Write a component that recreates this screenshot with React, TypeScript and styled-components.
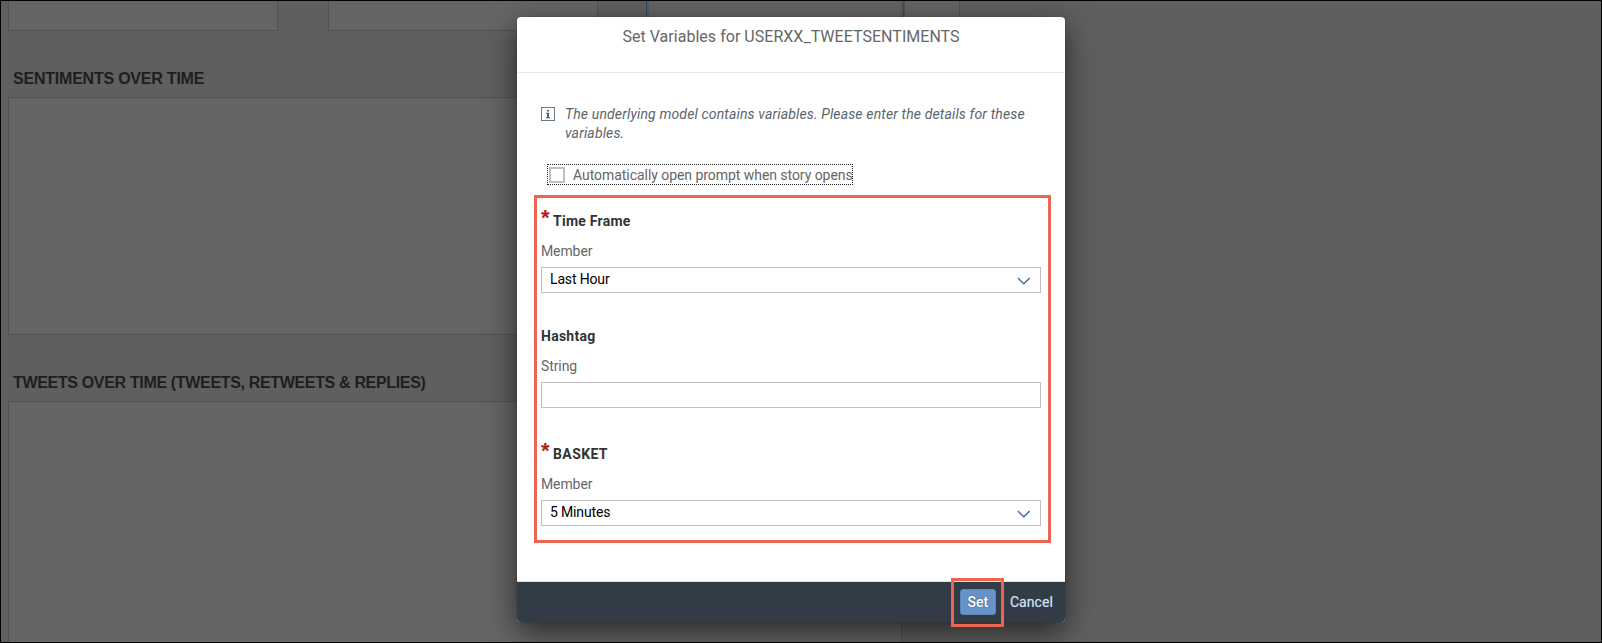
import React from 'react';
import styled, { createGlobalStyle } from 'styled-components';

const GlobalStyle = createGlobalStyle`
  *, *::before, *::after { box-sizing: border-box; }
  body { margin: 0; background: #5f5f5f; font-family: Roboto, "Liberation Sans", sans-serif; }
  button, input { font: inherit; }
`;

const Screen = styled.div`
  position: relative;
  width: 1602px;
  height: 643px;
  overflow: hidden;
  border: 1px solid #000;
  background: #5f5f5f;
`;

const Story = styled.main`
  display: flex;
  flex-direction: column;
  padding-left: 7px;
`;

const TileRow = styled.div`
  display: flex;
  align-items: flex-start;
  height: 30px;
`;

const Tile = styled.div<{ $width: number; $gap?: number }>`
  width: ${(p) => p.$width}px;
  height: 30px;
  margin-right: ${(p) => p.$gap ?? 0}px;
  background: #656565;
  border: 1px solid #515151;
  border-top: 0;
`;

const SelectedTile = styled(Tile)`
  background: #636363;
  border-color: #2d4a6d;
  box-shadow: inset 2px 0 #5b5b5b, inset -2px 0 #5b5b5b;
`;

const SectionTitle = styled.h2<{ $tracking: number }>`
  margin: 38px 0 8px 5px;
  font: 700 16px/20px "Liberation Sans", Arial, sans-serif;
  letter-spacing: ${(p) => p.$tracking}px;
  color: #1d1e1f;
`;

const ChartPanel = styled.div<{ $height: number }>`
  width: 894px;
  height: ${(p) => p.$height}px;
  flex: none;
  background: #656565;
  border: 1px solid #515151;
`;

const Dialog = styled.section`
  position: absolute;
  left: 516px;
  top: 16px;
  width: 548px;
  height: 605px;
  display: flex;
  flex-direction: column;
  border-radius: 4px;
  background: #fff;
  box-shadow: 0 10px 30px rgba(0, 0, 0, 0.6), 0 0 2px rgba(0, 0, 0, 0.2);
`;

const DialogHeader = styled.header`
  height: 56px;
  padding-top: 10px;
  border-bottom: 1px solid #e8e8e8;
  text-align: center;
  font-size: 16px;
  line-height: 20px;
  letter-spacing: 0.03px;
  color: #666;
`;

const DialogBody = styled.div`
  flex: 1;
  padding: 32px 14px 0 17px;
`;

const Info = styled.div`
  display: flex;
  gap: 10px;
  padding-left: 7px;
`;

const InfoIcon = styled.svg`
  flex: none;
  width: 14px;
  height: 14px;
  margin-top: 2px;
`;

const InfoText = styled.p`
  margin: 0;
  width: 475px;
  font-size: 14px;
  font-style: italic;
  line-height: 19px;
  letter-spacing: 0.145px;
  color: #5a656d;
`;

const CheckRow = styled.label`
  display: flex;
  align-items: center;
  width: 306px;
  height: 21px;
  margin: 21px 0 10px 13px;
  padding: 1px 0 0 1px;
  border: 1px dotted #222;
  font-size: 14px;
  line-height: 20px;
  letter-spacing: -0.05px;
  white-space: nowrap;
  color: #666;
`;

const CheckBox = styled.span`
  flex: none;
  width: 16px;
  height: 16px;
  margin-right: 8px;
  border: 2px solid #bfbfbf;
  background: #fff;
`;

const VariableForm = styled.div`
  width: 517px;
  height: 348px;
  padding: 13px 7px 13px 4px;
  border: 3px solid #ec6553;
`;

const Field = styled.div<{ $after?: number }>`
  display: flex;
  flex-direction: column;
  width: 500px;
  margin-bottom: ${(p) => p.$after ?? 0}px;
`;

const FieldName = styled.div<{ $tracking: number }>`
  display: flex;
  height: 20px;
  margin-bottom: 10px;
  font-size: 14px;
  font-weight: 700;
  line-height: 20px;
  letter-spacing: ${(p) => p.$tracking}px;
  color: #333;
`;

const Required = styled.span`
  width: 12px;
  margin-top: -4px;
  font-family: "Liberation Sans", Arial, sans-serif;
  font-size: 22px;
  line-height: 22px;
  letter-spacing: 0;
  color: #ae1f14;
`;

const FieldKind = styled.div`
  height: 20px;
  margin-bottom: 6px;
  font-size: 14px;
  line-height: 20px;
  letter-spacing: -0.1px;
  color: #666;
`;

const Select = styled.button`
  display: flex;
  justify-content: space-between;
  height: 26px;
  padding: 1px 10px 0 8px;
  border: 1px solid #bfbfbf;
  background: #fff;
  font-size: 14px;
  line-height: 20px;
  letter-spacing: -0.15px;
  color: #000;
`;

const Chevron = styled.svg`
  width: 13px;
  height: 8px;
  margin-top: 8px;
`;

const TextInput = styled.input`
  height: 26px;
  padding: 0 8px;
  border: 1px solid #bfbfbf;
  border-radius: 0;
  outline: 0;
  background: #fff;
  font-size: 14px;
`;

const DialogFooter = styled.footer`
  position: relative;
  display: flex;
  justify-content: flex-end;
  align-items: flex-start;
  gap: 14px;
  height: 41px;
  padding: 7px 12px 0 0;
  border-top: 1px solid #dfe1e3;
  border-radius: 0 0 4px 4px;
  background: #323c46;
  background-clip: padding-box;
`;

const SetButton = styled.button`
  width: 36px;
  height: 26px;
  padding: 0;
  border: 1px solid #5a87b9;
  border-radius: 3px;
  background: #6694c9;
  font-size: 14px;
  font-weight: 500;
  color: #fff;
  text-shadow: 0 0 2px rgba(0, 0, 0, 0.4);
`;

const CancelButton = styled.button`
  height: 26px;
  padding: 0;
  border: 0;
  background: none;
  font-size: 14px;
  letter-spacing: 0.08px;
  color: #d1e0f4;
  text-shadow: 0 0 1px rgba(209, 224, 244, 0.5);
`;

const SetHighlight = styled.div`
  position: absolute;
  right: 61px;
  top: -4px;
  width: 53px;
  height: 49px;
  border: 3px solid #ec6553;
  pointer-events: none;
`;

function Dropdown({ value }: { value: string }) {
  return (
    <Select>
      {value}
      <Chevron viewBox="0 0 13 8" fill="none" stroke="#456b9a" strokeWidth="1.4">
        <path d="M.9 1 6.8 6.7 12.7 1" />
      </Chevron>
    </Select>
  );
}

export default function App() {
  return (
    <>
      <GlobalStyle />
      <Screen>
        <Story>
          <TileRow>
            <Tile $width={270} $gap={50} />
            <Tile $width={270} $gap={48} />
            <SelectedTile $width={258} />
            <Tile $width={56} />
          </TileRow>
          <SectionTitle $tracking={-0.22}>SENTIMENTS OVER TIME</SectionTitle>
          <ChartPanel $height={238} />
          <SectionTitle $tracking={-0.335}>TWEETS OVER TIME (TWEETS, RETWEETS &amp; REPLIES)</SectionTitle>
          <ChartPanel $height={260} />
        </Story>

        <Dialog>
          <DialogHeader>Set Variables for USERXX_TWEETSENTIMENTS</DialogHeader>
          <DialogBody>
            <Info>
              <InfoIcon viewBox="0 0 14 14">
                <rect x=".5" y=".5" width="13" height="13" fill="none" stroke="#6d7b84" />
                <path d="M6 3h2v1.6H6zM5 5.8h3v4.2h1.2v1.2H4.9V10H6V7H5z" fill="#5a6870" />
              </InfoIcon>
              <InfoText>
                The underlying model contains variables. Please enter the details for these variables.
              </InfoText>
            </Info>
            <CheckRow>
              <CheckBox />
              Automatically open prompt when story opens
            </CheckRow>
            <VariableForm>
              <Field $after={33}>
                <FieldName $tracking={0.25}><Required>*</Required>Time Frame</FieldName>
                <FieldKind>Member</FieldKind>
                <Dropdown value="Last Hour" />
              </Field>
              <Field $after={36}>
                <FieldName $tracking={0.25}>Hashtag</FieldName>
                <FieldKind>String</FieldKind>
                <TextInput />
              </Field>
              <Field>
                <FieldName $tracking={0.4}><Required>*</Required>BASKET</FieldName>
                <FieldKind>Member</FieldKind>
                <Dropdown value="5 Minutes" />
              </Field>
            </VariableForm>
          </DialogBody>
          <DialogFooter>
            <SetButton>Set</SetButton>
            <CancelButton>Cancel</CancelButton>
            <SetHighlight />
          </DialogFooter>
        </Dialog>
      </Screen>
    </>
  );
}
